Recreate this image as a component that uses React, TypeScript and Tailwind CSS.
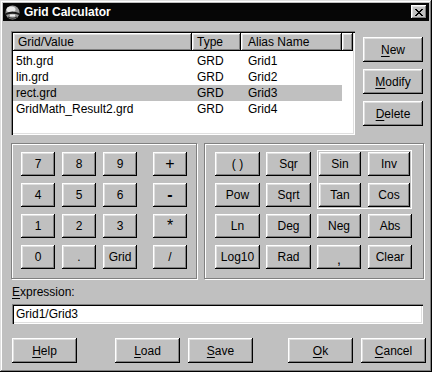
import React from "react";

const raised =
  "bg-[#c0c0c0] shadow-[inset_-1px_-1px_#000,inset_1px_1px_#fff,inset_-2px_-2px_#808080,inset_2px_2px_#dfdfdf]";
const sunken =
  "shadow-[inset_1px_1px_#808080,inset_2px_2px_#000,inset_-1px_-1px_#fff,inset_-2px_-2px_#dfdfdf]";
const etched = "border border-[#808080] shadow-[1px_1px_0_#fff,inset_1px_1px_0_#fff]";

function Btn({ className = "", children }: { className?: string; children: React.ReactNode }) {
  return (
    <div className={`${raised} flex items-center justify-center text-[12px] text-black leading-none select-none ${className}`}>
      {children}
    </div>
  );
}

function U({ c }: { c: string }) {
  return <span className="underline underline-offset-[2px]">{c}</span>;
}

const rows = [
  ["5th.grd", "GRD", "Grid1"],
  ["lin.grd", "GRD", "Grid2"],
  ["rect.grd", "GRD", "Grid3"],
  ["GridMath_Result2.grd", "GRD", "Grid4"],
];

function Icon() {
  return (
    <svg width="15" height="15" viewBox="0 0 15 15">
      <circle cx="7.5" cy="7.5" r="7" fill="#9a9a9a" />
      <ellipse cx="6" cy="4.5" rx="4.5" ry="3" fill="#e8e8e8" />
      <path d="M1 8 Q7.5 5 14 8 L14 10 Q7.5 7.5 1 10 Z" fill="#1a1a1a" />
      <rect x="5" y="9.5" width="5" height="2" fill="#f0f0f0" />
      <path d="M3 12 Q7.5 14.5 12 12" stroke="#303030" strokeWidth="1.2" fill="none" />
    </svg>
  );
}

export default function App() {
  const kb = "w-[34px] h-[24px]";
  const fb = "w-[45px] h-[24px]";
  const ib = "w-[42px] h-[24px]";
  const nb = "w-[44px] h-[24px]";
  return (
    <div className="w-[432px] h-[372px] bg-[#c0c0c0] p-[3px] flex flex-col font-['Liberation_Sans',Arial,sans-serif] shadow-[inset_-1px_-1px_#000,inset_1px_1px_#dfdfdf,inset_-2px_-2px_#808080,inset_2px_2px_#fff]">
      {/* Title bar */}
      <div className="h-[18px] bg-[#060606] flex items-center pl-[2px] pr-[2px]">
        <Icon />
        <span className="ml-[4px] text-white font-bold text-[12px] leading-none">Grid Calculator</span>
        <div className={`${raised} ml-auto w-[16px] h-[14px] flex items-center justify-center`}>
          <svg width="8" height="7" viewBox="0 0 8 7">
            <path d="M0 0h2v1h1v1h2v-1h1v-1h2v1h-1v1h-1v1h-1v1h1v1h1v1h1v1h-2v-1h-1v-1h-2v1h-1v1h-2v-1h1v-1h1v-1h1v-1h-1v-1h-1v-1h-1z" fill="#000" />
          </svg>
        </div>
      </div>

      <div className="flex flex-col pl-[8px] pt-[10px]">
        {/* Row 1: list + buttons */}
        <div className="flex">
          <div className={`${sunken} bg-white w-[344px] h-[104px] p-[2px] flex flex-col`}>
            <div className="flex h-[18px] text-[12px] text-black">
              <div className={`${raised} w-[179px] flex items-center pl-[5px]`}>Grid/Value</div>
              <div className={`${raised} w-[49px] flex items-center pl-[5px]`}>Type</div>
              <div className={`${raised} w-[101px] flex items-center pl-[7px]`}>Alias Name</div>
              <div className={`${raised} w-[11px]`} />
            </div>
            <div className="pt-[2px] flex flex-col">
              {rows.map((r, i) => (
                <div
                  key={i}
                  className={`flex h-[16px] w-[329px] items-center text-[12px] text-black ${i === 2 ? "bg-[#c0c0c0]" : ""}`}
                >
                  <div className="w-[179px] pl-[3px]">{r[0]}</div>
                  <div className="w-[49px] pl-[5px]">{r[1]}</div>
                  <div className="w-[101px] pl-[7px]">{r[2]}</div>
                </div>
              ))}
            </div>
          </div>
          <div className="ml-[8px] mt-[6px] flex flex-col gap-[7px]">
            <Btn className="w-[60px] h-[25px]"><U c="N" />ew</Btn>
            <Btn className="w-[60px] h-[25px]"><U c="M" />odify</Btn>
            <Btn className="w-[60px] h-[25px]"><U c="D" />elete</Btn>
          </div>
        </div>

        {/* Row 2: keypads */}
        <div className="flex mt-[8px] gap-[7px]">
          <div className={`${etched} w-[186px] h-[136px] pl-[9px] pt-[8px] flex flex-col gap-[7px]`}>
            {[
              ["7", "8", "9", "+"],
              ["4", "5", "6", "-"],
              ["1", "2", "3", "*"],
              ["0", ".", "Grid", "/"],
            ].map((row, i) => (
              <div key={i} className="flex gap-[7px]">
                <Btn className={kb}>{row[0]}</Btn>
                <Btn className={kb}>{row[1]}</Btn>
                <Btn className={kb}>{row[2]}</Btn>
                <Btn className={`${kb} ml-[9px] ${row[3] === "+" || row[3] === "*" ? "text-[16px]" : ""} ${row[3] === "-" ? "text-[16px] font-bold" : ""}`}>
                  {row[3]}
                </Btn>
              </div>
            ))}
          </div>

          <div className={`${etched} w-[220px] h-[136px] pl-[10px] pt-[6px] flex gap-[6px]`}>
            <div className="mt-[2px] flex flex-col gap-[7px]">
              {[
                ["( )", "Sqr"],
                ["Pow", "Sqrt"],
                ["Ln", "Deg"],
                ["Log10", "Rad"],
              ].map((row, i) => (
                <div key={i} className="flex gap-[6px]">
                  <Btn className={fb}>{row[0]}</Btn>
                  <Btn className={fb}>{row[1]}</Btn>
                </div>
              ))}
            </div>
            <div className="flex flex-col">
              <div className="border border-white p-[1px] flex flex-col gap-[7px]">
                <div className="flex gap-[7px]">
                  <Btn className={ib}>Sin</Btn>
                  <Btn className={ib}>Inv</Btn>
                </div>
                <div className="flex gap-[7px]">
                  <Btn className={ib}>Tan</Btn>
                  <Btn className={ib}>Cos</Btn>
                </div>
              </div>
              <div className="mt-[5px] flex flex-col gap-[7px]">
                <div className="flex gap-[7px]">
                  <Btn className={nb}>Neg</Btn>
                  <Btn className={nb}>Abs</Btn>
                </div>
                <div className="flex gap-[7px]">
                  <Btn className={`${nb} text-[14px] pt-[4px]`}>,</Btn>
                  <Btn className={nb}>Clear</Btn>
                </div>
              </div>
            </div>
          </div>
        </div>

        {/* Expression */}
        <div className="ml-[1px] mt-[6px] text-[12px] text-black leading-[14px]">
          <U c="E" />xpression:
        </div>
        <div className={`${sunken} ml-[1px] mt-[5px] w-[411px] h-[20px] bg-white flex items-center pl-[4px] text-[12px] text-black`}>
          Grid1/Grid3
        </div>

        {/* Bottom buttons */}
        <div className="ml-[1px] mt-[14px] flex">
          <Btn className="w-[65px] h-[25px]"><U c="H" />elp</Btn>
          <Btn className="w-[65px] h-[25px] ml-[38px]"><U c="L" />oad</Btn>
          <Btn className="w-[65px] h-[25px] ml-[8px]"><U c="S" />ave</Btn>
          <Btn className="w-[65px] h-[25px] ml-[35px]"><U c="O" />k</Btn>
          <Btn className="w-[65px] h-[25px] ml-[8px]"><U c="C" />ancel</Btn>
        </div>
      </div>
    </div>
  );
}
